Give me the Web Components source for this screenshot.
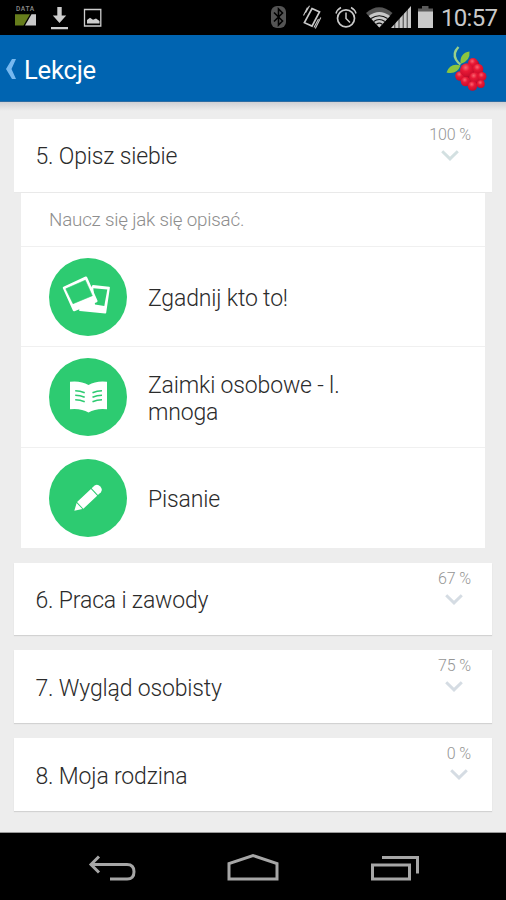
<!DOCTYPE html>
<html lang="pl">
<head>
<meta charset="utf-8">
<title>Lekcje</title>
<style>
html,body{margin:0;padding:0}
body{width:506px;height:900px;overflow:hidden;background:#ededed;font-family:Roboto,"Noto Sans",sans-serif}
</style>
</head>
<body>
<lesson-app></lesson-app>
<script>
class Base extends HTMLElement{
  constructor(){super();this.attachShadow({mode:'open'}).innerHTML=this.view();}
  view(){return '';}
}
customElements.define('status-bar',class extends Base{view(){return `<style>
:host{display:flex;height:35px;background:#000;color:#c9c9c9;justify-content:space-between}
svg{display:block;flex:none}
.left,.right{display:flex}
.data{width:21px;padding:6px 0 0 15px;font:500 6.6px/7px Roboto,sans-serif;letter-spacing:.6px;color:#8c8c8c}
.data span{display:block;position:relative;left:1px}
.data svg{margin-top:1px}
time{font-size:24px;line-height:37px;width:61px;margin-right:4px;white-space:nowrap;letter-spacing:-.7px}
</style>
<div class="left">
<div class="data"><span>DATA</span><svg width="21" height="12"><path d="M0 .3H15L8.5 11.5H0Z" fill="#667d1c"/><path d="M16.5 .3H21V11.5H10Z" fill="#c9c9c9"/></svg></div>
<svg width="80" height="35" viewBox="36 0 80 35"><g fill="#cdcdcd"><path d="M57.3 7h4.400v8.500h4.500L59.500 23 52.800 15.500h4.500ZM51 27h17v2.200H51Z"/><path d="M87 23.500v-3.500l3-2.300 3 2 3-1.200 3.500 2.500v2.500Z"/></g><path d="M84.500 9.500h16.300v16.500H84.500Z" fill="none" stroke="#cdcdcd" stroke-width="1.300"/></svg>
</div>
<div class="right"><svg width="175" height="35" viewBox="266 0 175 35">
<rect x="271" y="6" width="15" height="22" rx="6" fill="#545454"/><path d="M274 12.500l8.500 8.500-4 4V9l4 4-8.500 8.500" fill="none" stroke="#000" stroke-width="1.600"/>
<g fill="none" stroke="#c9c9c9" stroke-width="1.700"><path d="M312 8.500l7.500 3.400-7.500 14.200-7.600-3.400Z"/><path d="M307.500 7.500l-4 8M309.500 5.800l-4 7M320.800 17.500l-4 8-1.500 3M318.500 19l-4.500 8.500" stroke-width="1.100"/>
<circle cx="346" cy="18.300" r="8.500"/><path d="M346 12.500v6l4 4M336 13.500q1-4 5-6M356 13.500q-1-4-5-6" stroke-width="1.500"/></g>
<path d="M366 13Q379 1.500 392.500 13L379.300 27.500Z" fill="#555"/><path d="M368.700 16Q379.300 7.800 390 16L379.300 27.500Z" fill="#c9c9c9"/><g fill="none" stroke="#111" stroke-width="1.100"><path d="M371 18.500q8.300-5.500 16.600 0M373.700 21.500q5.600-4 11.200 0M376.300 24.300q3-2.300 6 0"/></g>
<path d="M411 6v22H391Z" fill="#c9c9c9"/><path d="M394.800 12v17M399 10v19M403.200 8v21M407.200 6v23" stroke="#000" stroke-width=".7"/>
<path d="M418 8.500h4v-2.500h6.500v2.500h4.500V12h-15Z" fill="#5b5b5b"/><path d="M418 11.500h15V28h-15Z" fill="#c9c9c9"/>
</svg><time>10:57</time></div>`}});
customElements.define('berry-logo',class extends Base{view(){
 const b=[[473,63,5],[460,76,4.800],[478,69,5.300],[466.800,70,6.800],[474.500,77.500,5.300],[482,76.500,4.500],[465.500,81.500,4.800],[480.800,84,4],[472.500,86,4.800]];
 return `<style>:host{display:block}svg{display:block}</style><svg width="44" height="48" viewBox="444 44 44 48"><defs><radialGradient id="b" cx=".42" cy=".32" r=".72"><stop offset="0" stop-color="#fa6570"/><stop offset=".4" stop-color="#e81936"/><stop offset="1" stop-color="#c40a2a"/></radialGradient></defs><path d="M462 66l16-5 6 14-10 14-12-8Z" fill="#b50a29"/>${b.map(c=>`<circle cx="${c[0]}" cy="${c[1]}" r="${c[2]}" fill="url(#b)"/>`).join('')}<path d="M458.500 47q-6 6-2.500 12.500 2 3.500 4.500 5" fill="none" stroke="#99d08b" stroke-width="2.400"/><path d="M460.500 64Q459.500 53 469.500 51.500 470.500 61 460.500 64ZM460.500 65.500Q450 62.500 446.500 72.500 457 75 460.500 65.500Z" fill="#8ac63f"/></svg>`}});
customElements.define('title-bar',class extends Base{view(){return `<style>
:host{display:flex;box-sizing:border-box;height:67px;background:#0064b1;border-bottom:1px solid #2c6ca3;color:#fff;align-items:center;padding:0 18px 0 6px;position:relative}
h1{font:400 25.600px/32px Roboto,sans-serif;margin:4px 0 0 7px;flex:1;letter-spacing:-.2px}
:host::after{content:"";position:absolute;left:0;right:0;top:67px;height:9px;background:linear-gradient(#d0d0d4,#ededed)}
svg{margin-top:2px}
</style><svg width="11" height="22" viewBox="0 0 11 22"><path d="M6 1H10L5.500 11 10 21H6L0 11Z" fill="#76b8ef"/></svg><h1><slot></slot></h1><berry-logo></berry-logo>`}});
customElements.define('lesson-card',class extends Base{
 static observedAttributes=['progress'];
 attributeChangedCallback(a,o,v){this.shadowRoot.querySelector('.p').textContent=v;}
 view(){return `<style>
:host{display:flex;box-sizing:border-box;height:72.700px;background:#fff;box-shadow:0 1px 1px #d2d2d2;padding:0 21px;justify-content:space-between}
:host([open]){height:73px;box-shadow:0 1px 0 #e9e9e9}
h2{font:300 23px/30px Roboto,sans-serif;color:#2b2b2b;margin:23.500px 0 0 .5px;white-space:nowrap;letter-spacing:-.17px}
:host([open]) h2{margin-top:23px}
.side{display:flex;flex-direction:column;align-items:center;padding-top:6px}
.p{font:300 16px/20px Roboto,sans-serif;color:#969696;letter-spacing:-.1px}
svg{display:block;margin-top:5px}
:host([open]) path{stroke:#d3e0e1}
</style><h2><slot></slot></h2><div class="side"><span class="p"></span><svg width="18" height="12"><path d="M1.200 1.200L9 8.800 16.800 1.200" fill="none" stroke="#d5dce3" stroke-width="3"/></svg></div>`}});
const icons={
 photos:`<g stroke-linejoin="round"><path d="M93 285.500L109 287.200 105.300 312.200 80 309.500Z" fill="#fff" stroke="#fff" stroke-width="1.800"/><path d="M93.300 287.800L107.300 289 104.300 305.500 95 304Z" fill="#2dcb71"/><path d="M64 287.300L86 277.200 96.300 300.600 74 309.500Z" fill="#fff" stroke="#fff" stroke-width="2.500"/><path d="M65.800 288.300L85.300 279.700 92.300 295.200 73 303.200Z" fill="#2dcb71" stroke="#2dcb71" stroke-width=".6"/></g>`,
 book:`<path d="M70 382.200Q81 381 88.500 385.500 96 381 107 382.200V409.700Q96 408.500 88.500 413 81 408.500 70 409.700Z" fill="#fff"/><path d="M75.200 391.200q5 0 9.500 2M75.200 395.700q5 0 9.500 2M75.200 400.200q5 0 9.500 2M102 391.200q-5 0-9.500 2M102 395.700q-5 0-9.500 2M102 400.200q-5 0-9.500 2" fill="none" stroke="#2dcb71" stroke-width="1.500"/>`,
 pencil:`<g transform="translate(87.500 498.500) rotate(-43)" fill="#fff"><path d="M-18 0L-11 -4.200V4.200ZM-10 -4.600H9V4.600H-10Z"/><path d="M10-4.600H14Q17.500-4 17.500 0 17.500 4 14 4.600H10Z"/></g>`};
const boxes={photos:'49 257.500 78 78',book:'49 358.500 78 78',pencil:'49 459 78 78'};
customElements.define('task-row',class extends Base{
 static observedAttributes=['icon'];
 attributeChangedCallback(a,o,v){this.shadowRoot.querySelector('.i').innerHTML=`<svg width="78" height="78" viewBox="${boxes[v]}">${icons[v]}</svg>`;}
 view(){return `<style>
:host{display:flex;box-sizing:border-box;height:100.700px;border-top:1.400px solid #f0f0f0;padding:0 28px;align-items:center;background:#fff}
.i{width:78px;height:78px;border-radius:50%;background:#2dcb71;flex:none;margin-top:.6px}
svg{display:block}
p{margin:3.500px 0 0 21px;width:215px;font:300 23px/27px Roboto,sans-serif;color:#2b2b2b;letter-spacing:-.16px}
</style><div class="i"></div><p><slot></slot></p>`}});
customElements.define('task-list',class extends Base{view(){return `<style>
:host{display:block;margin:1px 7px 14.700px;background:#fff;height:355px}
.d{height:52.500px;padding-left:28px;font:300 18.800px/54px Roboto,sans-serif;color:#8e8e8e;letter-spacing:-.2px}
</style><div class="d"><slot name="about"></slot></div><slot></slot>`}});
customElements.define('nav-bar',class extends Base{view(){return `<style>
:host{display:block;height:67px;background:#000;border-top:1px solid #999}svg{display:block}
</style><svg width="506" height="67" viewBox="0 833 506 67"><g fill="none" stroke="#a6a6a6" stroke-width="3"><path d="M91 864.500H127Q134 864.500 134 871.800T127 879H110M99 856.500L91 864.500 99 872.500"/><path d="M229 879V863.500L253 855.500 277 863.500V879Z"/><path d="M372.500 865H409.500V879H372.500ZM382 857.500H417.500V873.500"/></g></svg>`}});
customElements.define('lesson-app',class extends Base{view(){return `<style>
:host{display:flex;flex-direction:column;height:900px}
main{flex:1;padding:17px 14px 0;min-height:0}
lesson-card+lesson-card{margin-top:15px}
</style><status-bar></status-bar><title-bar>Lekcje</title-bar><main>
<lesson-card open progress="100 %">5. Opisz siebie</lesson-card>
<task-list><span slot="about">Naucz się jak się opisać.</span>
<task-row icon="photos">Zgadnij kto to!</task-row><task-row icon="book">Zaimki osobowe - l. mnoga</task-row><task-row icon="pencil">Pisanie</task-row></task-list>
<lesson-card progress="67 %">6. Praca i zawody</lesson-card><lesson-card progress="75 %">7. Wygląd osobisty</lesson-card><lesson-card progress="0 %">8. Moja rodzina</lesson-card>
</main><nav-bar></nav-bar>`}});
</script>
</body>
</html>
